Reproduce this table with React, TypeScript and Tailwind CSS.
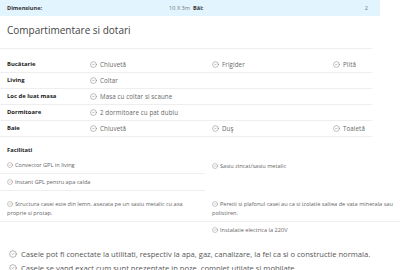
import { CircleCheck } from 'lucide-react';

/* ── Data ─────────────────────────────────────────── */
const ROOMS: { label: string; items: string[] }[] = [
  { label: 'Bucătarie', items: ['Chiuvetă', 'Frigider', 'Plită'] },
  { label: 'Living', items: ['Coltar'] },
  { label: 'Loc de luat masa', items: ['Masa cu coltar si scaune'] },
  { label: 'Dormitoare', items: ['2 dormitoare cu pat dublu'] },
  { label: 'Baie', items: ['Chiuvetă', 'Duş', 'Toaletă'] },
];

const FONT = { fontFamily: '"Open Sans", "Liberation Sans", sans-serif' };

function Check({ size = 7 }: { size?: number }) {
  return <CircleCheck size={size} strokeWidth={1.6} className="shrink-0 text-[#777]" />;
}

function RoomCell({ text }: { text?: string }) {
  if (!text) return <div />;
  return (
    <div className="flex items-center gap-[3px] whitespace-nowrap text-[6.2px] tracking-[0.1px] text-[#666]">
      <Check />
      <span>{text}</span>
    </div>
  );
}

function Facility({ text, border = true, tall = false }: { text?: string; border?: boolean; tall?: boolean }) {
  return (
    <div
      className={`flex gap-[3px] px-[7px] text-[5.6px] leading-[9px] text-[#666] ${border ? 'border-b border-[#eeeeee]' : ''} ${tall ? 'pt-[9px]' : 'items-center'}`}
    >
      {text && (
        <p>
          <span className="mr-[2px] inline-block align-[-1px]">
            <Check size={6} />
          </span>
          {text}
        </p>
      )}
    </div>
  );
}

export default function App() {
  return (
    <div className="h-[270px] w-[400px] overflow-hidden bg-white" style={FONT}>
      {/* Dimensiuni */}
      <div className="flex h-[16px] w-[380px] items-center whitespace-nowrap bg-[#e2f4fd] px-[7px] text-[5.6px] text-[#333]">
        <span className="w-[153px] font-bold">Dimensiune:</span>
        <span className="w-[30px] text-right text-[#777]">10 X 3m</span>
        <span className="ml-[3px] flex-1 font-bold">Băi:</span>
        <span className="pr-[5px] text-[#777]">2</span>
      </div>

      {/* Title */}
      <h2 className="px-[7px] pt-[7px] text-[10px] leading-[14px] text-[#444]">Compartimentare si dotari</h2>
      <div className="mt-[11px] w-[372px] border-b border-[#eeeeee]" />

      {/* Rooms table */}
      <div className="mt-[8px] w-[372px]">
        {ROOMS.map((r) => (
          <div key={r.label} className="grid h-[16px] grid-cols-[83px_122px_121px_1fr] items-center border-b border-[#eeeeee] pl-[7px]">
            <span className="text-[5.9px] font-bold text-[#222]">{r.label}</span>
            <RoomCell text={r.items[0]} />
            <RoomCell text={r.items[1]} />
            <RoomCell text={r.items[2]} />
          </div>
        ))}
      </div>

      {/* Facilitati */}
      <h3 className="px-[7px] pt-[9px] text-[5.8px] font-bold leading-[8px] text-[#222]">Facilitati</h3>
      <div className="mt-[4px] grid grid-cols-[205px_195px] grid-rows-[16px_17px_31px_16px]">
        <Facility text="Convector GPL in living" />
        <Facility text="Sasiu zincat/sasiu metalic" border={false} />
        <Facility text="Instant GPL pentru apa calda" />
        <Facility border={false} />
        <Facility tall text="Structura casei este din lemn, asezata pe un sasiu metalic cu axa proprie si protap." />
        <Facility tall text="Peretii si plafonul casei au ca si izolatie saltea de vata minerala sau polistiren." />
        <Facility border={false} />
        <Facility text="Instalatie electrica la 220V" border={false} />
      </div>

      {/* Notes */}
      <ul className="mt-[9px] whitespace-nowrap px-[9px] text-[7.6px] leading-[14px] text-[#555]">
        <li className="flex items-center gap-[4px]">
          <Check size={8} />
          <span>Casele pot fi conectate la utilitati, respectiv la apa, gaz, canalizare, la fel ca si o constructie normala.</span>
        </li>
        <li className="flex items-center gap-[4px]">
          <Check size={8} />
          <span>Casele se vand exact cum sunt prezentate in poze, complet utilate si mobilate.</span>
        </li>
      </ul>
    </div>
  );
}
